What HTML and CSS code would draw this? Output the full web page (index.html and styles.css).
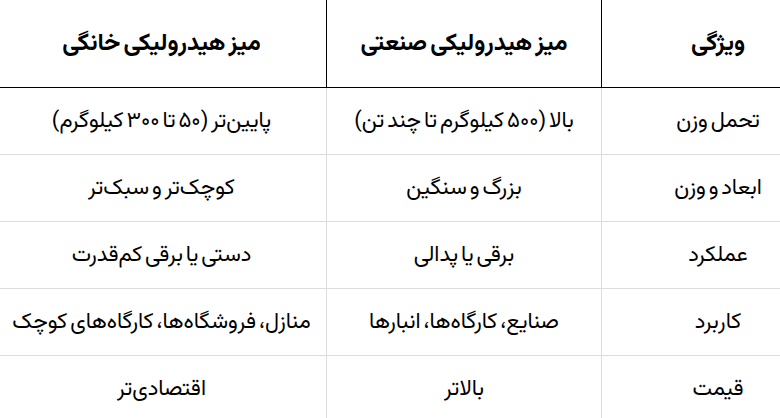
FILE: index.html
```html
<!DOCTYPE html>
<html lang="fa" dir="ltr">
<head>
<meta charset="utf-8">
<title>مقایسه میز هیدرولیکی</title>
<link rel="stylesheet" href="styles.css">
</head>
<body>
<div class="frame">
  <table class="compare">
    <colgroup>
      <col class="col-feature">
      <col class="col-industrial">
      <col class="col-home">
    </colgroup>
    <thead>
      <tr class="head-row">
        <th>ویژگی</th>
        <th>میز هیدرولیکی صنعتی</th>
        <th>میز هیدرولیکی خانگی</th>
      </tr>
    </thead>
    <tbody>
      <tr>
        <td>تحمل وزن</td>
        <td>بالا (۵۰۰ کیلوگرم تا چند تن)</td>
        <td>پایین‌تر (۵۰ تا ۳۰۰ کیلوگرم)</td>
      </tr>
      <tr>
        <td>ابعاد و وزن</td>
        <td>بزرگ و سنگین</td>
        <td>کوچک‌تر و سبک‌تر</td>
      </tr>
      <tr>
        <td>عملکرد</td>
        <td>برقی یا پدالی</td>
        <td>دستی یا برقی کم‌قدرت</td>
      </tr>
      <tr>
        <td>کاربرد</td>
        <td>صنایع، کارگاه‌ها، انبارها</td>
        <td>منازل، فروشگاه‌ها، کارگاه‌های کوچک</td>
      </tr>
      <tr>
        <td>قیمت</td>
        <td>بالاتر</td>
        <td>اقتصادی‌تر</td>
      </tr>
    </tbody>
  </table>
</div>
</body>
</html>
```
FILE: styles.css
```css
html, body {
  margin: 0;
  padding: 0;
  background: #fff;
}

.frame {
  width: 780px;
  height: 418px;
  overflow: hidden;
}

.compare {
  direction: rtl;
  table-layout: fixed;
  border-collapse: separate;
  border-spacing: 0;
  width: 837px;
  margin-left: -3px;
  font-family: Vazirmatn, "Noto Sans Arabic", sans-serif;
  color: #000;
}

.col-feature { width: 232px; }
.col-industrial { width: 275px; }
.col-home { width: 330px; }

.compare th,
.compare td {
  padding: 0;
  text-align: center;
  vertical-align: middle;
}

.compare th {
  height: 87px;
  font-size: 24px;
  font-weight: 700;
  word-spacing: -3px;
  border-bottom: 1px solid #000;
}

.compare th + th {
  border-right: 1px solid #000;
}

.compare td {
  height: 66px;
  font-size: 22px;
  font-weight: 400;
  word-spacing: -3px;
  border-bottom: 1px solid #dddddd;
}

.compare td + td {
  border-right: 1px solid #dddddd;
}
```
